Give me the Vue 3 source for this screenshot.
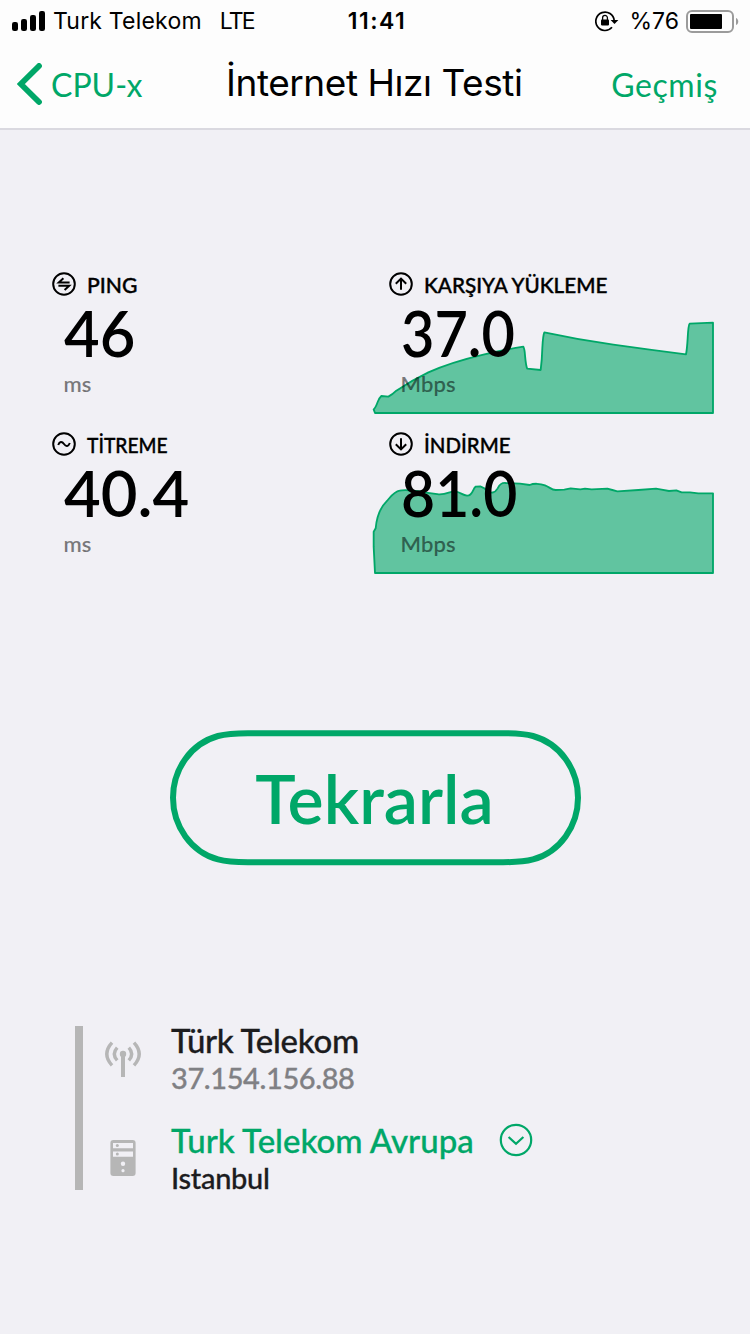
<template>
  <div class="page">
    <header class="header">
      <!-- status bar -->
      <div class="status-bar">
        <div class="status-left">
          <svg class="signal" width="34" height="20" viewBox="0 0 34 20">
            <rect x="0" y="11" width="6" height="9" rx="2.2" />
            <rect x="9" y="8" width="6" height="12" rx="2.2" />
            <rect x="18" y="4" width="6" height="16" rx="2.2" />
            <rect x="27" y="0" width="6" height="20" rx="2.2" />
          </svg>
          <span class="carrier">Turk Telekom</span>
          <span class="network">LTE</span>
        </div>
        <div class="clock">11:41</div>
        <div class="status-right">
          <svg class="lock" width="24" height="22" viewBox="0 0 24 22">
            <path d="M17 17.3A9.2 9.2 0 1 1 19.2 10.5" fill="none" stroke="#000" stroke-width="1.7" />
            <path d="M15.6 10h7.8L19.5 14z" />
            <rect x="6" y="9.4" width="8" height="6" rx="0.8" />
            <path d="M7.6 10V7.8a2.4 2.4 0 0 1 4.8 0V10" fill="none" stroke="#000" stroke-width="1.3" />
          </svg>
          <span class="percent">%76</span>
          <svg class="battery" width="53" height="23" viewBox="0 0 53 23">
            <rect x="1" y="1" width="46" height="21" rx="5" fill="none" stroke="#9b9b9b" stroke-width="2" />
            <rect x="4" y="4" width="32" height="15" rx="1" />
            <path d="M50 8c3 1 3 6 0 7z" fill="#9b9b9b" />
          </svg>
        </div>
      </div>

      <!-- navigation -->
      <nav class="nav">
        <a class="back">
          <svg width="25" height="42" viewBox="0 0 25 42">
            <path d="M22 3L3.8 21L22 39" fill="none" stroke="#00a768" stroke-width="5.8" stroke-linecap="round" />
          </svg>
          <span>CPU-x</span>
        </a>
        <h1 class="title">İnternet Hızı Testi</h1>
        <a class="history">Geçmiş</a>
      </nav>
    </header>

    <main>
      <section class="stats">
        <div v-for="item in stats" :key="item.label" class="stat">
          <svg v-if="item.chart" class="chart" width="360" height="160" viewBox="0 0 1080 480">
            <path :d="item.chart" />
          </svg>
          <div class="stat-head">
            <svg width="24" height="24" viewBox="0 0 24 24">
              <circle cx="12" cy="12" r="10.8" />
              <path :d="item.icon" />
            </svg>
            <span :class="['stat-label', item.id]">{{ item.label }}</span>
          </div>
          <div :class="['stat-value', item.id]">{{ item.value }}</div>
          <div class="stat-unit">{{ item.unit }}</div>
        </div>
      </section>

      <button class="repeat">
        <svg class="outline" width="411" height="136" viewBox="170 730 411 136">
          <path d="M248 733.2H503C516 733.2 525 733.8 533 736C560 743.5 578 769 578 797.7C578 826 560 852 533 859.4C525 861.6 516 862.2 503 862.2H248C235 862.2 226 861.6 218 859.4C191 852 173 826 173 797.7C173 769 191 743.5 218 736C226 733.8 235 733.2 248 733.2Z" />
        </svg>
        <span>Tekrarla</span>
      </button>

      <section class="provider">
        <div class="divider"></div>
        <div class="icons">
          <svg width="36" height="36" viewBox="0 0 36 36" fill="none" stroke="#b6b6b6" stroke-width="3.4">
            <circle cx="18" cy="13" r="3.2" fill="#b6b6b6" stroke="none" />
            <path d="M18 13V36" stroke-width="4" />
            <path d="M12.2 6.6Q6.4 13 12.2 19.4M23.8 6.6Q29.6 13 23.8 19.4" />
            <path d="M7 1.6Q-3.4 13 7 24.4M29 1.6Q39.4 13 29 24.4" />
          </svg>
          <svg width="26" height="36" viewBox="0 0 26 36">
            <rect x="0.4" y="0" width="25.2" height="36" rx="3" fill="#b6b6b6" />
            <path d="M3 3H23V8.2H3zM3 11.4H23V16.8H3z" fill="#f1f0f5" />
            <circle cx="7.3" cy="5.6" r="1.5" fill="#b6b6b6" />
            <circle cx="7.3" cy="14" r="1.5" fill="#b6b6b6" />
            <circle cx="13" cy="23.7" r="2.2" fill="#f1f0f5" />
            <circle cx="13" cy="30.7" r="1.6" fill="#f1f0f5" />
          </svg>
        </div>
        <div class="details">
          <div class="isp">Türk Telekom</div>
          <div class="ip">37.154.156.88</div>
          <div class="server">
            <span>Turk Telekom Avrupa</span>
            <svg width="34" height="34" viewBox="0 0 34 34">
              <circle cx="17" cy="17" r="15.2" />
              <path d="M9.6 14L17 20.8L24.4 14" />
            </svg>
          </div>
          <div class="city">Istanbul</div>
        </div>
      </section>
    </main>
  </div>
</template>

<script setup>
const stats = [
  {
    id: 'ping',
    label: 'PING',
    value: '46',
    unit: 'ms',
    icon: 'M17.6 10.5H6.8L11.4 6.3M6.4 13.7H17.2L12.6 17.9'
  },
  {
    id: 'upload',
    label: 'KARŞIYA YÜKLEME',
    value: '37.0',
    unit: 'Mbps',
    icon: 'M12 17.8V6.8M6.8 11.8L12 6.6L17.2 11.8',
    chart: 'M30 459L26 448Q32 443 38 426Q44 412 49 408L70 410Q82 404 94 392C125 371 155 354 190 337C245 313 300 297 355 284Q415 270 475 260Q479 268 480 286Q483 320 487 326L527 330Q531 300 532 264Q534 225 538 217Q640 239 745 254Q850 269 963 283Q966 268 968 235Q970 195 974 191L1044 188V459Z'
  },
  {
    id: 'jitter',
    label: 'TİTREME',
    value: '40.4',
    unit: 'ms',
    icon: 'M6.2 13C7.6 9.3 10 9.3 12 12S16.4 14.7 17.8 11'
  },
  {
    id: 'download',
    label: 'İNDİRME',
    value: '81.0',
    unit: 'Mbps',
    icon: 'M12 6.2V17.2M6.8 12.2L12 17.4L17.2 12.2',
    chart: 'M30 459L26 380V335L32 325C35 290 49 260 64 245C76 232 87 214 104 212C120 207 145 212 165 214C190 220 205 221 224 223C252 221 254 213 273 215C286 217 293 226 306 227C324 228 323 205 332 200L346 199C356 202 361 205 366 212C377 222 390 219 398 205C405 191 411 188 422 189L465 191L494 195C505 190 525 190 540 196C553 201 560 210 572 210L598 209L617 205L646 208L660 206L680 208L727 206L742 210L757 214L820 210L873 206L890 209L912 213L934 211L950 217L975 217L1000 220L1044 220V459Z'
  }
]
</script>

<style>
body {
  background: #f1f0f5;
}
</style>

<style scoped>
.page {
  width: 750px;
  height: 1334px;
  overflow: hidden;
  background: #f1f0f5;
  color: #000;
  font-family: Lato, "Open Sans", sans-serif;
}

.header {
  height: 130px;
  box-sizing: border-box;
  background: #fdfdfd;
  border-bottom: 2px solid #dad9e0;
}

/* status bar */
.status-bar {
  display: grid;
  grid-template-columns: 1fr auto 1fr;
  align-items: center;
  height: 40px;
  padding: 0 11px 0 12px;
  font-family: Inter, sans-serif;
  font-size: 23px;
  line-height: 42px;
}

.status-left,
.status-right {
  display: flex;
  align-items: center;
}

.status-right {
  justify-content: flex-end;
}

.carrier {
  margin-left: 7px;
  letter-spacing: 0.2px;
}

.network {
  margin-left: 18px;
  letter-spacing: -1.8px;
}

.clock {
  padding-left: 3px;
  font-weight: 600;
  letter-spacing: 1.5px;
}

.percent {
  margin: 0 7px 0 10px;
}

/* navigation */
.nav {
  display: flex;
  align-items: center;
  height: 88px;
  padding: 0 32px 0 17px;
  color: #00a768;
  font-size: 32px;
  line-height: 88px;
}

.back {
  display: flex;
  align-items: center;
  width: 209px;
}

.back span {
  margin-left: 9px;
  padding-top: 1px;
}

.title {
  margin: 0;
  padding-bottom: 2px;
  color: #000;
  font-family: Inter, sans-serif;
  font-size: 37px;
  font-weight: 400;
  letter-spacing: -0.45px;
  white-space: nowrap;
}

.history {
  margin-left: auto;
  padding-top: 1px;
  letter-spacing: 0.6px;
}

/* measurements */
.stats {
  display: grid;
  grid-template-columns: 337px 1fr;
  grid-auto-rows: 160px;
  padding: 136px 20px 0 51.5px;
}

.stat {
  position: relative;
}

.chart {
  position: absolute;
  top: -6px;
  left: -23.5px;
}

.chart path {
  fill: #61c4a0;
  stroke: #00a768;
  stroke-width: 5.5;
  stroke-linejoin: round;
}

.stat-head {
  position: relative;
  display: flex;
  align-items: center;
  gap: 11px;
  height: 35px;
}

.stat-head svg {
  flex: none;
  fill: none;
  stroke: #000;
  stroke-width: 2;
}

.stat-label {
  padding-top: 2px;
  font-size: 22px;
  font-weight: 500;
  transform-origin: left center;
  -webkit-text-stroke: 0.4px currentColor;
}

.stat-label.ping {
  transform: scaleX(0.96);
}

.stat-label.upload {
  transform: scaleX(0.94);
}

.stat-label.jitter {
  transform: scaleX(0.875);
}

.stat-label.download {
  transform: scaleX(0.93);
}

.stat-value {
  position: relative;
  width: max-content;
  margin-left: 12px;
  font-size: 64px;
  font-weight: 600;
  line-height: 63px;
  transform-origin: left center;
}

.stat-value.ping {
  transform: scaleX(0.96);
}

.stat-value.upload {
  transform: scaleX(0.9);
}

.stat-value.jitter {
  transform: scaleX(0.99);
}

.stat-value.download {
  transform: scaleX(0.92);
}

.stat-unit {
  position: relative;
  padding-left: 12px;
  color: rgba(0, 0, 0, 0.5);
  font-size: 22px;
  font-weight: 500;
  line-height: 40px;
  letter-spacing: 0.1px;
  -webkit-text-stroke: 0.2px currentColor;
}

/* repeat button */
.repeat {
  position: relative;
  display: flex;
  align-items: center;
  justify-content: center;
  width: 411px;
  height: 136px;
  margin: 144px 0 0 170px;
  padding: 0 2px 1px 0;
  border: 0;
  background: none;
  color: #00a768;
  font-family: inherit;
  font-size: 68px;
  font-weight: 600;
}

.outline {
  position: absolute;
  inset: 0;
}

.outline path {
  fill: none;
  stroke: #00a768;
  stroke-width: 6;
}

/* provider */
.provider {
  display: flex;
  height: 164px;
  margin: 160px 0 0 75px;
}

.divider {
  width: 8px;
  background: #b6b6b6;
}

.icons {
  display: flex;
  flex-direction: column;
  align-items: center;
  justify-content: space-between;
  width: 36px;
  padding: 15px 0 14px;
  margin-left: 22px;
  box-sizing: border-box;
}

.details {
  margin-left: 30px;
  color: #1c1c1e;
  font-weight: 500;
  white-space: nowrap;
  -webkit-text-stroke: 0.3px currentColor;
}

.isp,
.server {
  font-size: 33px;
  line-height: 28px;
}

.isp {
  letter-spacing: -0.3px;
}

.ip,
.city {
  font-size: 29px;
  line-height: 48px;
}

.ip {
  color: #808084;
  letter-spacing: -0.4px;
}

.city {
  letter-spacing: -0.3px;
}

.server {
  display: flex;
  align-items: center;
  height: 28px;
  margin-top: 24px;
  color: #00a768;
}

.server svg {
  margin-left: 25px;
  fill: none;
  stroke: #00a768;
  stroke-width: 2.2;
}
</style>
